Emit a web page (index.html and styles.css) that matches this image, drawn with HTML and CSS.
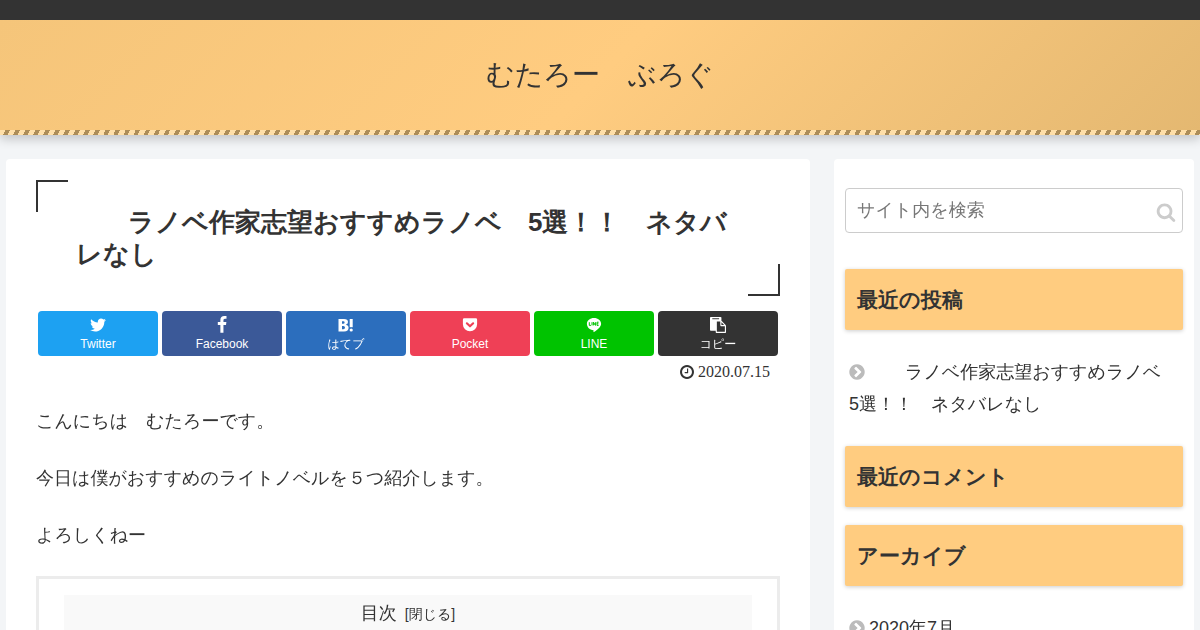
FILE: index.html
```html
<!DOCTYPE html>
<html lang="ja">
<head>
<meta charset="utf-8">
<meta name="viewport" content="width=device-width, initial-scale=1">
<title>むたろー　ぶろぐ</title>
<link rel="stylesheet" href="styles.css">
</head>
<body>
<svg class="defs" aria-hidden="true">
  <symbol id="chevron" viewBox="0 0 1792 1792"><path d="M845 1395l454-454q19-19 19-45t-19-45l-454-454q-19-19-45-19t-45 19l-102 102q-19 19-19 45t19 45l307 307-307 307q-19 19-19 45t19 45l102 102q19 19 45 19t45-19zm819-499q0 209-103 385.5t-279.5 279.5-385.5 103-385.5-103-279.5-279.5-103-385.5 103-385.5 279.5-279.5 385.5-103 385.5 103 279.5 279.5 103 385.5z"/></symbol>
</svg>
<header class="header"><a class="site-name" href="#">むたろー　ぶろぐ</a></header>
<div class="content">
  <main class="main">
    <h1 class="title">　　ラノベ作家志望おすすめラノベ　5選！！　ネタバレなし</h1>
    <div class="share">
      <a class="share-button twitter" href="#">
        <svg class="icon" viewBox="0 0 1792 1792"><path d="M1684 408q-67 98-162 167 1 14 1 42 0 130-38 259.5t-115.5 248.5-184.5 210.5-258 146-323 54.5q-271 0-496-145 35 4 78 4 225 0 401-138-105-2-188-64.5t-114-159.5q33 5 61 5 43 0 85-11-112-23-185.5-111.5t-73.5-205.5v-4q68 38 146 41-66-44-105-115t-39-154q0-88 44-163 121 149 294.5 238.5t371.5 99.5q-8-38-8-74 0-134 94.5-228.5t228.5-94.5q140 0 236 102 109-21 205-78-37 115-142 178 93-10 186-50z"/></svg>
        <span>Twitter</span></a>
      <a class="share-button facebook" href="#">
        <svg class="icon" viewBox="0 0 1792 1792"><path d="M1343 12v264h-157q-86 0-116 36t-30 108v189h293l-39 296h-254v759h-306v-759h-255v-296h255v-218q0-186 104-288.5t277-102.5q147 0 228 12z"/></svg>
        <span>Facebook</span></a>
      <a class="share-button hatena" href="#">
        <svg class="icon" viewBox="0 0 18 18"><path fill-rule="evenodd" d="M1.500 3h5.500q4 0 4 3.100 0 2-2.200 2.600 2.800.5 2.800 3.100 0 3.700-4.500 3.700H1.500zM5 5.300v2.500h1.200q1.400 0 1.400-1.300T6.200 5.300zM5 10v3.200h1.400q1.600 0 1.600-1.600T6.400 10z"/><path d="M12.700 3h3v8.200h-3z"/><circle cx="14.200" cy="14" r="1.600"/></svg>
        <span>はてブ</span></a>
      <a class="share-button pocket" href="#">
        <svg class="icon" viewBox="0 0 18 18"><path fill-rule="evenodd" d="M3.200 2.300h11.600q1.300 0 1.300 1.300v4.600a7.100 7.100 0 0 1-14.200 0V3.600q0-1.300 1.300-1.300zM5.100 6.500q-.7.700 0 1.500l3.200 3.100q.7.600 1.400 0L12.900 8q.7-.8 0-1.500-.8-.7-1.500 0L9 8.800 6.600 6.500q-.8-.7-1.500 0z"/></svg>
        <span>Pocket</span></a>
      <a class="share-button line" href="#">
        <svg class="icon" viewBox="0 0 18 18"><path d="M9 2c4 0 7.100 2.500 7.100 5.800 0 3.200-3.700 6.100-7.100 8.300-.6.300-.5-.4-.5-1.800C4.700 14 1.900 11.100 1.900 7.800 1.900 4.500 5 2 9 2z"/><path class="line-mark" d="M4.300 6.200v3.200h1.600M7 6.200v3.200M8.400 9.400V6.200l2 3.200V6.200M13.600 6.200H12v3.200h1.600M12 7.800h1.400"/></svg>
        <span>LINE</span></a>
      <a class="share-button copy" href="#">
        <svg class="icon copy-icon" viewBox="0 0 1792 1792"><path d="M768 1664h896v-640h-416q-40 0-68-28t-28-68v-416h-384v1152zm256-1440v-64q0-13-9.500-22.500t-22.500-9.500h-704q-13 0-22.500 9.500t-9.500 22.500v64q0 13 9.500 22.500t22.500 9.500h704q13 0 22.500-9.500t9.500-22.500zm256 672h299l-299-299v299zm512 128v672q0 40-28 68t-68 28h-960q-40 0-68-28t-28-68v-160h-544q-40 0-68-28t-28-68v-1344q0-40 28-68t68-28h1088q40 0 68 28t28 68v328q21 13 36 28l408 408q28 28 48 76t20 88z"/></svg>
        <span>コピー</span></a>
    </div>
    <div class="date">
      <svg class="date-icon" viewBox="128 128 1536 1536"><path d="M1024 544v448q0 14-9 23t-23 9h-320q-14 0-23-9t-9-23v-64q0-14 9-23t23-9h224v-352q0-14 9-23t23-9h64q14 0 23 9t9 23zm416 352q0-148-73-273t-198-198-273-73-273 73-198 198-73 273 73 273 198 198 273 73 273-73 198-198 73-273zm224 0q0 209-103 385.500t-279.500 279.500-385.500 103-385.500-103-279.500-279.500-103-385.500 103-385.500 279.500-279.500 385.500-103 385.500 103 279.500 279.500 103 385.500z"/></svg>
      <time datetime="2020-07-15">2020.07.15</time>
    </div>
    <div class="article">
      <p>こんにちは　むたろーです。</p>
      <p>今日は僕がおすすめのライトノベルを５つ紹介します。</p>
      <p>よろしくねー</p>
    </div>
    <nav class="toc">
      <div class="toc-title">目次<button class="toc-toggle" type="button">[閉じる]</button></div>
    </nav>
  </main>
  <aside class="sidebar">
    <form class="search">
      <input class="search-input" type="text" placeholder="サイト内を検索" aria-label="サイト内を検索">
      <button class="search-button" type="button" aria-label="検索">
        <svg class="search-icon" viewBox="0 0 1792 1792"><path d="M1216 832q0-185-131.500-316.500t-316.500-131.500-316.500 131.500-131.500 316.500 131.500 316.500 316.500 131.500 316.500-131.500 131.500-316.500zm512 832q0 52-38 90t-90 38q-54 0-90-38l-343-342q-179 124-399 124-143 0-273.500-55.500t-225-150-150-225-55.500-273.500 55.500-273.500 150-225 225-150 273.500-55.500 273.500 55.500 225 150 150 225 55.500 273.500q0 220-124 399l343 343q37 37 37 90z"/></svg>
      </button>
    </form>
    <section class="widget">
      <h2 class="widget-title">最近の投稿</h2>
      <ul class="widget-list">
        <li><a href="#"><svg class="bullet"><use href="#chevron"/></svg>　　ラノベ作家志望おすすめラノベ　5選！！　ネタバレなし</a></li>
      </ul>
    </section>
    <section class="widget">
      <h2 class="widget-title">最近のコメント</h2>
    </section>
    <section class="widget">
      <h2 class="widget-title">アーカイブ</h2>
      <ul class="widget-list">
        <li><a href="#"><svg class="bullet"><use href="#chevron"/></svg>2020年7月</a></li>
      </ul>
    </section>
  </aside>
</div>
</body>
</html>
```
FILE: styles.css
```css
* {
  box-sizing: border-box;
}

html {
  height: 100%;
  overflow: hidden;
}

body {
  margin: 0;
  border-top: 20px solid #333;
  background: #f3f5f7;
  color: #333;
  font-family: "Liberation Sans", "WenQuanYi Zen Hei", "Noto Sans CJK JP", sans-serif;
  font-size: 18px;
  line-height: 32px;
}

a {
  color: inherit;
  text-decoration: none;
}

.defs {
  display: none;
}

.header {
  padding: 32px 16px 33px;
  background: linear-gradient(135deg, #f5c57a 0%, #ffcc80 50%, #e4b871 100%);
  box-shadow: 0 4px 10px rgba(0, 0, 0, 0.2);
  text-align: center;
}

.header::after {
  content: "";
  display: block;
  height: 5px;
  margin: 33px -16px -33px;
  background: repeating-linear-gradient(116deg, #ffdfa8 0, #ffdfa8 5px, #ad8d58 5px, #ad8d58 9px);
}

.site-name {
  display: block;
  font-size: 28px;
  line-height: 45px;
}

.content {
  display: grid;
  grid-template-columns: minmax(0, 804fr) minmax(0, 360fr);
  gap: 24px;
  max-width: 1200px;
  margin: 24px auto 0;
  padding: 0 6px;
}

.main,
.sidebar {
  border-radius: 4px;
  background: #fff;
}

.main {
  padding: 21px 30px 40px;
}

.title,
.widget-title {
  font-family: "Liberation Sans", sans-serif;
}

.title {
  position: relative;
  margin: 0;
  padding: 26px 40px;
  font-size: 26px;
  line-height: 32px;
}

.title::before,
.title::after {
  content: "";
  position: absolute;
  width: 32px;
  height: 32px;
  box-sizing: border-box;
}

.title::before {
  top: 0;
  left: 0;
  border-top: 2px solid #333;
  border-left: 2px solid #333;
}

.title::after {
  right: 0;
  bottom: 0;
  border-right: 2px solid #333;
  border-bottom: 2px solid #333;
}

.share {
  display: grid;
  grid-template-columns: repeat(6, 1fr);
  gap: 4px;
  margin-top: 15px;
  padding: 0 2px;
}

.share-button {
  display: flex;
  flex-direction: column;
  align-items: center;
  height: 45px;
  padding-top: 5px;
  border-radius: 4px;
  color: #fff;
  font-size: 12px;
  line-height: 20px;
}

.icon {
  width: 18px;
  height: 18px;
  fill: currentColor;
}

.copy-icon {
  width: 16px;
  height: 16px;
  margin: 1px 0;
}

.line-mark {
  fill: none;
  stroke: #00c300;
  stroke-width: 1;
}

.twitter { background: #1da1f2; }
.facebook { background: #3b5998; }
.hatena { background: #2c6ebd; }
.pocket { background: #ef4056; }
.line { background: #00c300; }
.copy { background: #333; }

.date {
  display: flex;
  justify-content: flex-end;
  align-items: center;
  gap: 4px;
  padding-right: 10px;
  font-family: "Liberation Serif", serif;
  font-size: 16px;
}

.date-icon {
  width: 14px;
  height: 14px;
  fill: currentColor;
}

.article {
  margin-top: 17px;
}

.article p {
  margin: 0 0 25px;
}

.toc {
  padding: 16px 25px;
  border: 3px solid #ececec;
}

.toc-title {
  padding: 2px 0;
  background: #f9f9f9;
  text-align: center;
}

.toc-toggle {
  margin-left: 8px;
  padding: 0;
  border: 0;
  background: none;
  color: inherit;
  font: inherit;
  font-size: 14px;
}

.sidebar {
  padding: 29px 11px;
}

.search {
  display: flex;
  align-items: center;
  margin-bottom: 36px;
  padding-right: 6px;
  border: 1px solid #ccc;
  border-radius: 4px;
}

.search-input {
  flex: 1;
  min-width: 0;
  height: 43px;
  padding: 0 11px;
  border: 0;
  background: none;
  color: inherit;
  font: inherit;
}

.search-input::placeholder {
  color: #777;
}

.search-button {
  display: flex;
  padding: 2px 0 0;
  border: 0;
  background: none;
}

.search-icon {
  width: 20px;
  height: 20px;
  fill: #ccc;
}

.widget {
  margin-bottom: 18px;
}

.widget-title {
  margin: 0;
  padding: 12px;
  border-radius: 2px;
  background: #ffcc80;
  box-shadow: 0 1px 4px rgba(0, 0, 0, 0.2);
  font-size: 21px;
  line-height: 37px;
}

.widget-list {
  margin: 0;
  padding: 26px 4px 8px;
  list-style: none;
}

.bullet {
  width: 18px;
  height: 18px;
  margin: 0 3px 0 -1px;
  vertical-align: -3px;
  fill: #bbb;
}
```
